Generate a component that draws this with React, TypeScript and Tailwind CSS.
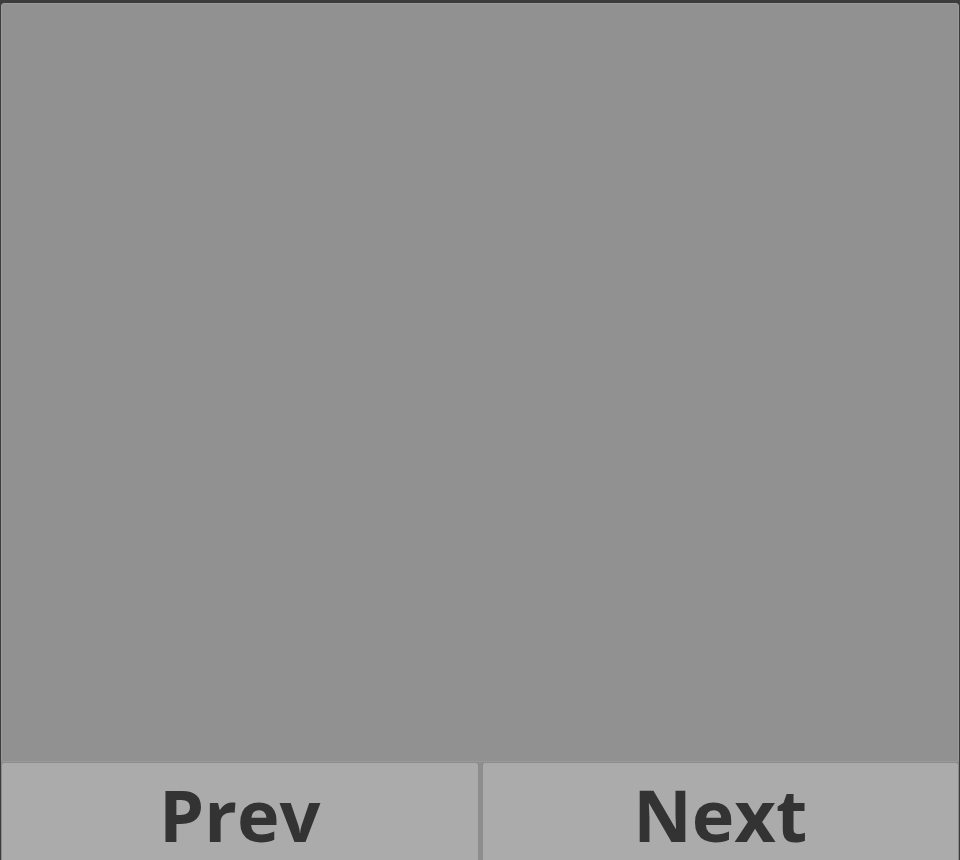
export default function App() {
  return (
    <div className="min-h-[860px] bg-[#3c3c3c] pt-[3px] px-px font-['Open_Sans',sans-serif]">
      <div className="h-[759px] rounded-t-[3px] border border-[#9a9a9a] bg-[#919191]" />
      <div className="flex gap-[3px] bg-[#8e8e8e]">
        <button className="h-[98px] flex-1 rounded-t-[3px] border border-b-0 border-[#8c8c8c] bg-[#ababab] pt-[4px] text-[72px] font-bold leading-none text-[#333333]">
          Prev
        </button>
        <button className="h-[98px] flex-1 rounded-t-[3px] border border-b-0 border-[#8c8c8c] bg-[#ababab] pt-[4px] text-[72px] font-bold leading-none text-[#333333]">
          Next
        </button>
      </div>
    </div>
  );
}
